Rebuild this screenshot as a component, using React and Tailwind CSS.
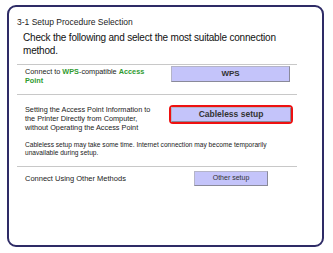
import React from "react";

function SetupButton({ children, className }) {
  return (
    <div
      className={
        "flex items-center justify-center bg-[#c4c4fa] border border-[#b4b4c8] border-r-[#8a8a9a] border-b-[#8a8a9a] text-[#333] " +
        className
      }
    >
      {children}
    </div>
  );
}

export default function App() {
  return (
    <div className="w-[333px] h-[253px] bg-white pt-[5px] pl-[7px] font-['Liberation_Sans',Arial,sans-serif] text-[#222]">
      <div className="w-[317px] h-[242px] border-2 border-[#2e2b66] rounded-[9px] pl-[8px] pr-[25px] pt-[10px]">
        <div className="text-[8.5px] leading-[10px]">3-1 Setup Procedure Selection</div>

        <div className="pl-[6px] pt-[4px] pb-[7px] pr-[10px] text-[10px] tracking-[-0.2px] leading-[13px] text-[#111]">
          Check the following and select the most suitable connection method.
        </div>

        <div className="border-t border-[#c8c8c8] flex items-start pt-[1px] pb-[9px] pl-[8px]">
          <div className="w-[146px] pr-[18px] pt-[1px] text-[7.3px] leading-[9px]">
            Connect to <b className="text-[#2f9b2f]">WPS</b>-compatible <b className="text-[#2f9b2f]">Access Point</b>
          </div>
          <SetupButton className="w-[119px] h-[16px] text-[8px] font-bold">WPS</SetupButton>
        </div>

        <div className="border-t border-[#c8c8c8] pt-[10px] pl-[8px]">
          <div className="flex items-start">
            <div className="w-[144px] pr-[16px] text-[7.3px] leading-[9px]">
              Setting the Access Point Information to the Printer Directly from Computer, without Operating the Access Point
            </div>
            <div className="border-2 border-[#ee1111] rounded-[4px] w-[124px] h-[19px] flex">
              <SetupButton className="flex-1 text-[8.5px] font-bold">Cableless setup</SetupButton>
            </div>
          </div>
          <div className="pt-[9px] pb-[9px] pr-[10px] text-[6.6px] leading-[8px]">
            Cableless setup may take some time. Internet connection may become temporarily unavailable during setup.
          </div>
        </div>

        <div className="border-t border-[#c8c8c8] flex items-center pt-[4px] pl-[8px]">
          <div className="w-[169px] text-[7.5px]">Connect Using Other Methods</div>
          <SetupButton className="w-[74px] h-[15px] text-[7px]">Other setup</SetupButton>
        </div>
      </div>
    </div>
  );
}
